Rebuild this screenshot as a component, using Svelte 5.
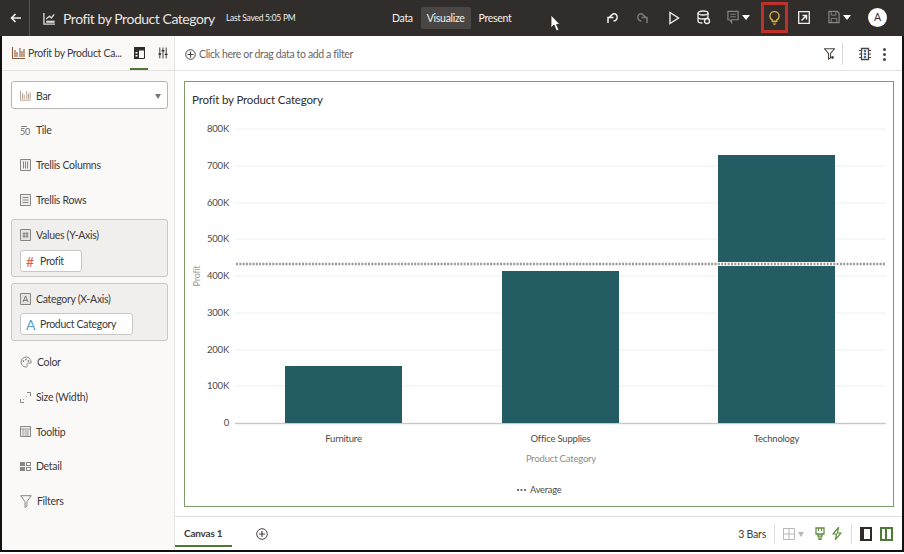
<script>
  const ticks = [['800K',129],['700K',166],['600K',203],['500K',239],['400K',276],['300K',313],['200K',350],['100K',386]];
  const bars = [
    { name: 'Furniture', x: 285, top: 366 },
    { name: 'Office Supplies', x: 502, top: 271 },
    { name: 'Technology', x: 718, top: 155 }
  ];
</script>

<div class="page">
  <header class="top">
    <div class="back">
      <svg width="12" height="10" viewBox="0 0 12 10"><path d="M11 5H2M5.500 1 1.500 5l4 4" fill="none" stroke="#f4f2f0" stroke-width="1.600"/></svg>
    </div>
    <div class="title">
      <svg width="13" height="13" viewBox="0 0 14 14"><path d="M1 1v12h12" fill="none" stroke="#d8d4d0" stroke-width="1.500"/><path d="M3.500 7.500 7 4.500l2 2L12 2.500" fill="none" stroke="#d8d4d0" stroke-width="1.500"/><path d="M3.500 10.500h9" stroke="#d8d4d0" stroke-width="2.400"/></svg>
      <span class="name">Profit by Product Category</span>
      <span class="saved">Last Saved 5:05 PM</span>
    </div>
    <nav class="modes">
      <span>Data</span><span class="on">Visualize</span><span>Present</span>
    </nav>
    <svg class="cursor" width="11" height="18" viewBox="0 0 11 18"><path d="M1 1v13l3-3 2.500 6 2.500-1-2.500-5.500H10z" fill="#fff" stroke="#222" stroke-width=".8"/></svg>
    <div class="tools">
      <svg class="t1" width="14" height="14" viewBox="0 0 14 14"><path d="M2 12V6.500h5.500M2.500 7 7 3c2.500-1 5 1.500 4 4.500-.5 1.500-2 2.500-3.500 2.500" fill="none" stroke="#f2f0ee" stroke-width="1.500"/></svg>
      <svg class="t2" width="14" height="14" viewBox="0 0 14 14"><path d="M11 12V6.500H5.500M10.500 7 6 3C3.500 2 1 4.500 2 7.500 2.500 9 4 10 5.500 10" fill="none" stroke="#7d7976" stroke-width="1.500"/></svg>
      <svg class="t3" width="12" height="14" viewBox="0 0 12 14"><path d="M2 1.500v11L10.500 7z" fill="none" stroke="#f2f0ee" stroke-width="1.400"/></svg>
      <svg class="t4" width="14" height="15" viewBox="0 0 14 15"><ellipse cx="6" cy="3" rx="5" ry="2" fill="none" stroke="#f2f0ee" stroke-width="1.300"/><path d="M1 3v8c0 1.200 2 2 4.500 2M11 3v4M1 7c0 1.200 2 2 5 2s5-.8 5-2" fill="none" stroke="#f2f0ee" stroke-width="1.300"/><circle cx="10" cy="11" r="2.500" fill="none" stroke="#f2f0ee" stroke-width="1.300"/></svg>
      <div class="t5">
        <svg width="12" height="14" viewBox="0 0 13 14"><path d="M1 1h11v9H5v3l-2-3H1z" fill="none" stroke="#8a8683" stroke-width="1.300"/><path d="M3.500 4h6M3.500 6.800h6" stroke="#8a8683"/></svg>
        <i class="caret"></i>
      </div>
      <div class="bulb">
        <svg width="11" height="14" viewBox="0 0 12 15"><path d="M3.500 9.500C2 8.500 1 7 1 5.500a5 5 0 0 1 10 0c0 1.500-1 3-2.500 4V11h-5z" fill="none" stroke="#d9a93a" stroke-width="1.600"/><path d="M4 13h4M4.800 14.500h2.400" stroke="#d9a93a"/></svg>
      </div>
      <svg class="t7" width="12" height="13" viewBox="0 0 12 13"><path d="M.7.700h10.600v11.600H.7z" fill="#312d2a" stroke="#f2f0ee" stroke-width="1.300"/><path d="M3.500 9.500 8 5M4.500 4.500H8.500V8.500" fill="none" stroke="#f2f0ee" stroke-width="1.500"/></svg>
      <div class="t8">
        <svg width="12" height="14" viewBox="0 0 13 14"><path d="M1 1h9l2 2v10H1z" fill="none" stroke="#8a8683" stroke-width="1.300"/><path d="M3.500 1v4h5V1M3.500 13V8.500h6V13" fill="none" stroke="#8a8683"/></svg>
        <i class="caret"></i>
      </div>
      <div class="avatar">A</div>
    </div>
  </header>

  <div class="frame">
    <aside class="side">
      <div class="side-tabs">
        <svg class="tab-lead" width="13" height="12" viewBox="0 0 13 12"><path d="M.5 0v11.500H13M3 3v7M5 5v5M8 1v9M10 4v6M12 2v8" fill="none" stroke="#8a5a3c" stroke-width="1.100"/></svg>
        <span class="tab-name">Profit by Product Ca...</span>
        <span class="tab-icon active">
          <svg width="11" height="12" viewBox="0 0 11 12"><path d="M.5.500h10v11H.5z" fill="none" stroke="#2f2b28"/><path d="M0 0h11v3.500H0zM0 3.500h5V12H0z" fill="#2f2b28"/><path d="M1.500 5h2v1.500h-2zM1.500 8h2v1.500h-2z" fill="#fff"/></svg>
        </span>
        <span class="tab-icon">
          <svg width="10" height="12" viewBox="0 0 11 12"><path d="M2 0v12M5.500 0v12M9 0v12" stroke="#2f2b28"/><path d="M.5 7h3M4 3.500h3M7.500 7.500h3" stroke="#2f2b28" stroke-width="1.600"/></svg>
        </span>
      </div>

      <div class="side-body">
        <div class="select">
          <svg width="11" height="11" viewBox="0 0 13 12"><path d="M.5 0v11.500H13M3 3v7M5 5v5M8 1v9M10 4v6M12 2v8" fill="none" stroke="#b09a88" stroke-width="1.100"/></svg>
          <span>Bar</span>
          <i class="sel-caret"></i>
        </div>

        <div class="row first"><svg width="11" height="11" viewBox="0 0 11 11"><path d="M1 .500h6" stroke="#8a8683"/></svg><b class="fifty">50</b><span>Tile</span></div>
        <div class="row">
          <svg class="ico" width="11" height="12" viewBox="0 0 11 12"><path d="M.5.500h10v11H.5z" fill="#f1efed" stroke="#8a8683"/><path d="M3.500 2.500v7M5.500 2.500v7M7.500 2.500v7" stroke="#8a8683"/></svg>
          <span>Trellis Columns</span>
        </div>
        <div class="row">
          <svg class="ico" width="11" height="12" viewBox="0 0 11 12"><path d="M.5.500h10v11H.5z" fill="#f1efed" stroke="#8a8683"/><path d="M2.500 3.500h6M2.500 6h6M2.500 8.500h6" stroke="#8a8683"/></svg>
          <span>Trellis Rows</span>
        </div>

        <div class="well">
          <div class="well-head">
            <svg class="ico" width="11" height="12" viewBox="0 0 11 12"><path d="M.5.500h10v11H.5z" fill="#e6e4e2" stroke="#8a8683"/><path d="M4 3v6M7 3v6M2.500 4.800h6M2.500 7.200h6" stroke="#6f6b68" stroke-width=".8"/></svg>
            <span>Values (Y-Axis)</span>
          </div>
          <div class="pill small"><em class="hash">#</em><span>Profit</span></div>
        </div>
        <div class="well second">
          <div class="well-head">
            <svg class="ico" width="11" height="12" viewBox="0 0 11 12"><path d="M.5.500h10v11H.5z" fill="#e6e4e2" stroke="#8a8683"/><path d="M3 9 5.500 3 8 9M3.800 7.300h3.400" fill="none" stroke="#6f6b68" stroke-width=".9"/></svg>
            <span>Category (X-Axis)</span>
          </div>
          <div class="pill wide"><em class="attr">A</em><span>Product Category</span></div>
        </div>

        <div class="row after">
          <svg class="ico" width="12" height="12" viewBox="0 0 12 12"><path d="M6 1a5 5 0 1 0 0 10c1.500 0 1.500-1 1-2s0-2 1.500-2H11c.5-3-2-6-5-6z" fill="none" stroke="#8a8683"/><circle cx="3.500" cy="5" r=".9" fill="#8a8683"/><circle cx="6" cy="3.500" r=".9" fill="#8a8683"/><circle cx="8.500" cy="5" r=".9" fill="#8a8683"/></svg>
          <span>Color</span>
        </div>
        <div class="row">
          <svg class="ico" width="11" height="11" viewBox="0 0 11 11"><path d="M.5 7v3.500H4M7 .500h3.500V4" fill="none" stroke="#8a8683"/><path d="M3 8l1.500-1.500M6 5l1.500-1.500" stroke="#8a8683" stroke-dasharray="1 1"/></svg>
          <span>Size (Width)</span>
        </div>
        <div class="row">
          <svg class="ico" width="11" height="11" viewBox="0 0 11 11"><path d="M.5.500h10v10H.5z" fill="#f1efed" stroke="#8a8683"/><path d="M.5 3h10M3 3v7.500M4.500 5h4.500M4.500 7h4.500M4.500 9h4.500" stroke="#8a8683" stroke-width=".8"/></svg>
          <span>Tooltip</span>
        </div>
        <div class="row">
          <svg class="ico" width="11" height="9" viewBox="0 0 11 9"><path d="M0 0h5v4H0zM6 0h5v4H6zM0 5h5v4H0zM6 5h5v4H6z" fill="#8a8683"/><path d="M7 1h3v2H7zM7 6h3v2H7z" fill="#fbf9f8"/></svg>
          <span>Detail</span>
        </div>
        <div class="row">
          <svg class="ico" width="12" height="13" viewBox="0 0 12 13"><path d="M.7.700h10.600L7 6.500V11l-2 1.500v-6z" fill="none" stroke="#8a8683"/></svg>
          <span>Filters</span>
        </div>
      </div>
    </aside>

    <main class="main">
      <div class="filterbar">
        <svg class="plus" width="11" height="11" viewBox="0 0 11 11"><circle cx="5.500" cy="5.500" r="4.800" fill="none" stroke="#4a4643"/><path d="M5.500 2.500v6M2.500 5.500h6" stroke="#4a4643" stroke-width="1.200"/></svg>
        <span class="hint">Click here or drag data to add a filter</span>
        <svg class="fa" width="11" height="12" viewBox="0 0 11 12"><path d="M.5.800h10L6.500 5.500V10L4.500 11V5.500z" fill="none" stroke="#4a4643" stroke-width="1.100"/><circle cx="8.500" cy="9.500" r="1.400" fill="#4a4643"/></svg>
        <i class="vr"></i>
        <svg class="fb" width="12" height="14" viewBox="0 0 12 14"><path d="M2.500 1.500h7v11h-7z" fill="none" stroke="#4a4643" stroke-width="1.300"/><path d="M0 3.500h2.500M9.500 3.500H12M0 7h2.500M9.500 7H12M0 10.500h2.500M9.500 10.500H12" stroke="#4a4643"/><circle cx="6" cy="4" r="1.300" fill="#4a6e9e"/><circle cx="6" cy="7" r="1.300" fill="#4a6e9e"/><circle cx="6" cy="10" r="1.300" fill="#4a6e9e"/></svg>
        <span class="dots"><i></i><i></i><i></i></span>
      </div>

      <div class="stage">
        <section class="card">
          <h2>Profit by Product Category</h2>
          <svg class="chart" width="708" height="424" viewBox="185 82 708 424" font-family="Lato, sans-serif" letter-spacing="-0.2">
            {#each ticks as [label, y]}
              <line x1="235" x2="886" y1={y} y2={y} stroke="#eceef0"/>
              <text x="229" y={y + 3} text-anchor="end" font-size="9.500" fill="#4c4a48">{label}</text>
            {/each}
            <line x1="235" x2="886" y1="423.500" y2="423.500" stroke="#c9c9c9" stroke-width="1.400"/>
            <text x="229" y="426" text-anchor="end" font-size="9.500" fill="#4c4a48">0</text>
            <text transform="translate(200 276) rotate(-90)" text-anchor="middle" font-size="9" fill="#9a9896">Profit</text>
            {#each bars as b}
              <rect x={b.x} y={b.top} width="117" height={423 - b.top} fill="#245c64"/>
              <text x={b.x + 58.500} y="442" text-anchor="middle" font-size="9.500" fill="#4c4a48">{b.name}</text>
            {/each}
            <line x1="236" x2="886" y1="264" y2="264" stroke="#fff" stroke-width="4"/>
            <line x1="236" x2="886" y1="264" y2="264" stroke="#9a9896" stroke-width="2.500" stroke-dasharray="2 1.300"/>
            <text x="561" y="462" text-anchor="middle" font-size="9.500" fill="#8e8c8a">Product Category</text>
            <line x1="517" x2="526" y1="490" y2="490" stroke="#77736f" stroke-width="2" stroke-dasharray="2 1.500"/>
            <text x="530" y="493" font-size="9.200" fill="#4c4a48">Average</text>
          </svg>
        </section>
      </div>

      <footer class="bottom">
        <div class="canvas-tab">Canvas 1</div>
        <svg class="add" width="12" height="12" viewBox="0 0 12 12"><circle cx="6" cy="6" r="5.300" fill="none" stroke="#4a4643"/><path d="M6 3v6M3 6h6" stroke="#4a4643" stroke-width="1.200"/></svg>
        <span class="count">3 Bars</span>
        <i class="vr2"></i>
        <svg width="12" height="12" viewBox="0 0 12 12"><path d="M.5.500h11v11H.5zM6 .500v11M.5 6h11" fill="none" stroke="#b9b7b5"/></svg>
        <i class="mini"></i>
        <svg class="paint" width="10" height="13" viewBox="0 0 10 13"><path d="M1 1h8v6H1zM3 7v2h1v3.500h2V9h1V7" fill="none" stroke="#5f8f3e" stroke-width="1.300"/><path d="M3.500 1v3M6.500 1v3" stroke="#5f8f3e"/></svg>
        <svg class="bolt" width="10" height="13" viewBox="0 0 10 13"><path d="M6.500.500 1 7h3.500l-1 5.500L9 6H5.500z" fill="none" stroke="#5f8f3e" stroke-width="1.200"/></svg>
        <i class="vr3"></i>
        <span class="panel-a"></span>
        <span class="panel-b"></span>
      </footer>
    </main>
  </div>
</div>

<style>
  :global(body) { margin: 0; background: #fff; }
  .page {
    width: 904px;
    height: 554px;
    overflow: hidden;
    background: #fff;
    font-family: Lato, "Open Sans", sans-serif;
    color: #3d3a38;
  }
  .top {
    height: 36px;
    background: #312d2a;
    display: flex;
    align-items: center;
    position: relative;
    color: #f4f2f0;
  }
  .back {
    width: 30px;
    height: 36px;
    box-sizing: border-box;
    border-right: 1px solid #57524e;
    display: flex;
    align-items: center;
    padding-left: 10px;
  }
  .title { display: flex; align-items: center; margin-left: 13px; }
  .name { font-size: 14px; margin-left: 7px; letter-spacing: -0.46px; width: 163px; white-space: nowrap; color: #e9e6e3; }
  .saved { font-size: 8.500px; letter-spacing: -0.25px; color: #f0eeec; white-space: nowrap; }
  .modes {
    position: absolute;
    left: 385px;
    top: 7px;
    display: flex;
    font-size: 10.500px;
    letter-spacing: -0.3px;
  }
  .modes span { height: 22px; line-height: 22px; padding: 0 7px; border-radius: 2px; }
  .modes .on { background: #4a4643; margin: 0 1px; padding: 0 6px; }
  .cursor { position: absolute; left: 550px; top: 14px; }
  .tools { position: absolute; left: 0; top: 0; width: 904px; height: 36px; pointer-events: none; }
  .tools > * { position: absolute; }
  .t1 { left: 606px; top: 11px; }
  .t2 { left: 636px; top: 11px; }
  .t3 { left: 668px; top: 11px; }
  .t4 { left: 697px; top: 10px; }
  .t5 { left: 727px; top: 10px; display: flex; align-items: center; gap: 3px; }
  .t8 { left: 828px; top: 10px; display: flex; align-items: center; gap: 3px; }
  .caret { width: 0; height: 0; border: 4px solid transparent; border-top: 5px solid #fff; border-bottom: 0; }
  .bulb {
    left: 761px;
    top: 2px;
    width: 27px;
    height: 31px;
    box-sizing: border-box;
    border: 3px solid #c0302a;
    display: flex;
    align-items: center;
    justify-content: center;
  }
  .t7 { left: 798px; top: 11px; }
  .avatar {
    left: 868px;
    top: 8px;
    width: 19px;
    height: 19px;
    border-radius: 50%;
    background: #fff;
    color: #312d2a;
    font-size: 10.500px;
    text-align: center;
    line-height: 19px;
  }

  .frame {
    height: 516px;
    display: flex;
    box-sizing: border-box;
    border-left: 2px solid #111;
    border-right: 2px solid #111;
    border-bottom: 2px solid #111;
  }
  .side {
    width: 173px;
    flex: none;
    box-sizing: border-box;
    background: #fbf9f8;
    border-right: 1px solid #e6e4e2;
    font-size: 10.500px;
    letter-spacing: -0.3px;
  }
  .side-tabs {
    height: 35px;
    display: flex;
    align-items: center;
    box-sizing: border-box;
    border-bottom: 1px solid #e4e2e0;
    padding-left: 10px;
    position: relative;
  }
  .tab-lead { flex: none; }
  .tab-name { flex: none; margin-left: 3px; width: 106px; white-space: nowrap; }
  .tab-icon { flex: none; display: flex; width: 24px; position: relative; height: 34px; align-items: center; }
  .tab-icon + .tab-icon { width: 12px; }
  .tab-icon.active::after {
    content: "";
    position: absolute;
    left: -4px;
    bottom: 0;
    width: 18px;
    height: 2px;
    background: #4f7a35;
  }
  .side-body { padding: 10px 6px 0 9px; }
  .select {
    height: 28px;
    box-sizing: border-box;
    border: 1px solid #b7b5b3;
    border-radius: 3px;
    background: #fff;
    display: flex;
    align-items: center;
    padding: 1px 8px 0;
    gap: 5px;
    position: relative;
  }
  .sel-caret {
    position: absolute;
    right: 6px;
    top: 12px;
    border: 3.500px solid transparent;
    border-top: 5px solid #7a7673;
    border-bottom: 0;
  }
  .row {
    height: 34.700px;
    display: flex;
    align-items: center;
    padding-left: 9px;
    white-space: nowrap;
  }
  .row.first { margin-top: 4px; position: relative; }
  .row.first svg { position: absolute; left: 9px; top: 13px; }
  .fifty { font-weight: 400; font-size: 9px; width: 16px; color: #6f6b68; padding-top: 3px; }
  .ico { flex: none; margin-right: 5px; }
  .well {
    height: 58px;
    box-sizing: border-box;
    margin-top: 2px;
    border: 1px solid #c9c7c5;
    border-radius: 3px;
    background: #f1efed;
    padding: 8px 8px 0;
  }
  .well.second { margin-top: 6px; }
  .well-head { display: flex; align-items: center; height: 13px; white-space: nowrap; }
  .pill {
    margin-top: 9px;
    height: 22px;
    box-sizing: border-box;
    background: #fff;
    border: 1px solid #c9c7c5;
    border-radius: 3px;
    display: flex;
    align-items: center;
    padding-left: 5px;
    gap: 4px;
    white-space: nowrap;
  }
  .second .pill { margin-top: 8px; }
  .small { width: 62px; }
  .wide { width: 113px; }
  .hash { font-style: normal; color: #d9604f; font-size: 14px; width: 10px; }
  .attr { font-style: normal; color: #5a9fc2; font-size: 14px; width: 10px; }
  .after { margin-top: 4px; }

  .main { flex: 1; min-width: 0; display: flex; flex-direction: column; }
  .filterbar {
    height: 35px;
    flex: none;
    box-sizing: border-box;
    border-bottom: 1px solid #e4e2e0;
    display: flex;
    align-items: center;
    padding: 2px 0 0 10px;
    position: relative;
  }
  .hint { font-size: 10.500px; letter-spacing: -0.36px; color: #6a6663; margin-left: 3px; white-space: nowrap; }
  .fa { margin-left: auto; }
  .vr { width: 1px; height: 22px; background: #d8d6d4; margin: 0 16px 0 7px; }
  .fb { margin-right: 12px; }
  .dots { display: flex; flex-direction: column; gap: 2px; margin-right: 16px; }
  .dots i { width: 3px; height: 3px; border-radius: 50%; background: #4a4643; }
  .stage { flex: 1; min-height: 0; padding: 10px 8px 9px 9px; box-sizing: border-box; }
  .card {
    width: 710px;
    height: 426px;
    box-sizing: border-box;
    border: 1px solid #7d9a6c;
    position: relative;
    background: #fff;
  }
  h2 {
    margin: 0;
    position: absolute;
    left: 7px;
    top: 11px;
    font-size: 11.500px;
    letter-spacing: -0.15px;
    font-weight: 400;
    color: #312d2a;
  }
  .chart { display: block; }
  .bottom {
    height: 34px;
    flex: none;
    box-sizing: border-box;
    border-top: 1px solid #e4e2e0;
    display: flex;
    align-items: center;
    font-size: 10.500px;
    letter-spacing: -0.2px;
  }
  .canvas-tab {
    width: 57px;
    height: 30px;
    box-sizing: border-box;
    line-height: 32px;
    padding-left: 9px;
    border-bottom: 2px solid #4f7a35;
    font-weight: 700;
    color: #3d3a38;
    align-self: flex-start;
    font-size: 10px;
  }
  .add { margin-left: 24px; }
  .count { margin-left: auto; margin-right: 8px; }
  .vr2 { width: 1px; height: 20px; background: #dedcda; margin-right: 8px; }
  .mini { border: 3.500px solid transparent; border-top: 5px solid #b9b7b5; border-bottom: 0; margin: 2px 11px 0 3px; }
  .paint { margin-right: 7px; }
  .vr3 { width: 1px; height: 20px; background: #dedcda; margin: 0 8px 0 9px; }
  .panel-a {
    width: 12px;
    height: 14px;
    box-sizing: border-box;
    border: 2px solid #2f2b28;
    border-left-width: 4px;
    background: #fff;
  }
  .panel-b {
    width: 13px;
    height: 14px;
    margin: 0 9px 0 8px;
    box-sizing: border-box;
    border: 2px solid #4f7a35;
    background: linear-gradient(to right, #fff 3px, #4f7a35 3px, #4f7a35 5px, #fff 5px);
  }
</style>
